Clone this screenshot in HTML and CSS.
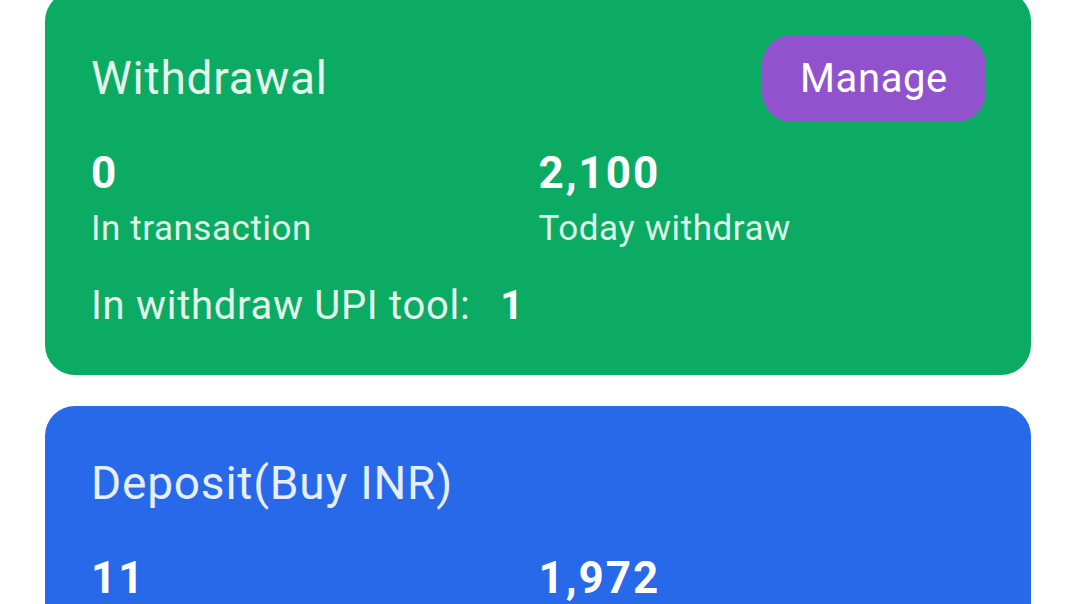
FILE: index.html
```html
<!DOCTYPE html>
<html lang="en">
<head>
<meta charset="utf-8">
<title>Dashboard</title>
<link rel="stylesheet" href="styles.css">
</head>
<body>
<main class="page">
  <section class="card card--withdraw">
    <div class="card-head">
      <h2 class="card-title">Withdrawal</h2>
      <button class="manage-btn" type="button">Manage</button>
    </div>
    <div class="stats">
      <div class="stat">
        <div class="stat-value">0</div>
        <div class="stat-label">In transaction</div>
      </div>
      <div class="stat">
        <div class="stat-value">2,100</div>
        <div class="stat-label">Today withdraw</div>
      </div>
    </div>
    <div class="tool-line">In withdraw UPI tool:<span class="tool-count">1</span></div>
  </section>

  <section class="card card--deposit">
    <div class="card-head">
      <h2 class="card-title">Deposit(Buy INR)</h2>
    </div>
    <div class="stats">
      <div class="stat">
        <div class="stat-value">11</div>
      </div>
      <div class="stat">
        <div class="stat-value">1,972</div>
      </div>
    </div>
  </section>
</main>
</body>
</html>
```

FILE: styles.css
```css
html, body {
  margin: 0;
  padding: 0;
  overflow: hidden;
  background: #ffffff;
}

body {
  font-family: Roboto, "Noto Sans", "Liberation Sans", sans-serif;
  width: 1076px;
  height: 604px;
}

.page {
  display: flex;
  flex-direction: column;
  gap: 31px;
  padding: 0 45px;
}

.card {
  border-radius: 30px;
  padding: 40px 45px 45px 46px;
  color: #ffffff;
}

.card--withdraw {
  background: #0cab63;
  margin-top: -9px;
  padding-top: 50px;
}

.card--deposit {
  background: #2869e9;
}

.card-head {
  display: flex;
  align-items: center;
  justify-content: space-between;
  height: 74px;
}

.card-title {
  margin: 0;
  font-size: 46px;
  font-weight: 400;
  letter-spacing: 0.8px;
  line-height: 74px;
  color: #e2f6ec;
}

.card--deposit .card-title {
  color: #e6eefc;
}

.manage-btn {
  font-family: inherit;
  font-size: 40px;
  font-weight: 400;
  letter-spacing: 0.6px;
  color: #ffffff;
  background: #9153cd;
  border: none;
  border-radius: 30px;
  height: 87px;
  width: 224px;
  padding: 0;
  margin: -6px 0 -7px 0;
  line-height: 87px;
}

.stats {
  display: grid;
  grid-template-columns: 1fr 1fr;
  margin-top: 33px;
}

.stat-value {
  font-size: 44px;
  font-weight: 700;
  letter-spacing: 2px;
  line-height: 50px;
  color: #ffffff;
}

.stat-label {
  margin-top: 10px;
  font-size: 35px;
  letter-spacing: 0.55px;
  line-height: 42px;
  color: #dcf5e8;
}

.tool-line {
  margin-top: 32px;
  font-size: 40px;
  letter-spacing: 0.7px;
  line-height: 48px;
  color: #e2f6ec;
}

.tool-count {
  margin-left: 30px;
  font-weight: 700;
  color: #ffffff;
}
```
